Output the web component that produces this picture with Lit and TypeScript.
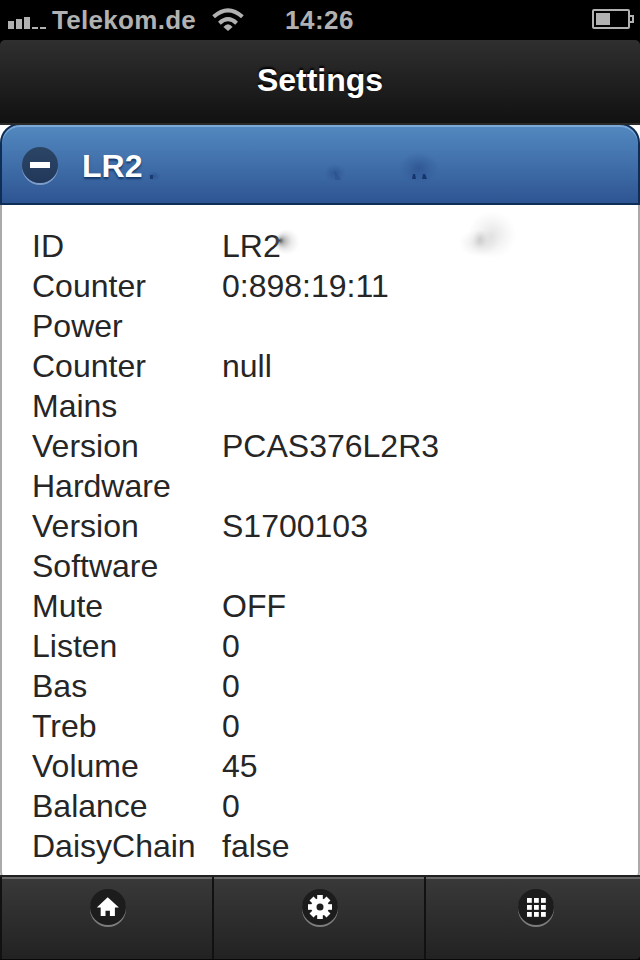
import { LitElement, html, svg, css } from "lit";
import { customElement } from "lit/decorators.js";

const rows: [string, string][] = [
  ["ID", "LR2"],
  ["Counter Power", "0:898:19:11"],
  ["Counter Mains", "null"],
  ["Version Hardware", "PCAS376L2R3"],
  ["Version Software", "S1700103"],
  ["Mute", "OFF"],
  ["Listen", "0"],
  ["Bas", "0"],
  ["Treb", "0"],
  ["Volume", "45"],
  ["Balance", "0"],
  ["DaisyChain", "false"],
];

const home = svg`<path d="M17.7 8.2 6.8 18.6h3.9V27h4.8v-5.2h4.4V27h5v-8.4h4z"/>`;
const gear = svg`
  <g>
    ${[0, 45, 90, 135].map((a) => svg`<rect x="15.2" y="6" width="5.6" height="24" transform="rotate(${a} 18 18)"/>`)}
    <circle cx="18" cy="18" r="8.8"/>
  </g>
  <circle cx="18" cy="18" r="3.5" fill="#1e1e1e"/>`;
const grid = svg`${[9, 16, 23].map((y) =>
  [9, 16, 23].map((x) => svg`<rect x=${x} y=${y} width="4.8" height="4.8"/>`)
)}`;

@customElement("app-root")
export class AppRoot extends LitElement {
  static styles = css`
    :host {
      display: flex;
      flex-direction: column;
      width: 640px;
      height: 960px;
      overflow: hidden;
      background: #000;
      font-family: "Liberation Sans", Arial, sans-serif;
      font-size: 32px;
      line-height: 40px;
      color: #262626;
    }
    * { box-sizing: border-box; }
    .status {
      flex: none;
      height: 40px;
      display: flex;
      align-items: center;
      color: #b1b1b1;
      font-size: 26px;
      font-weight: bold;
      padding-left: 8px;
    }
    .status svg { display: block; flex: none; fill: #b1b1b1; }
    .carrier { width: 160px; margin-left: 6px; letter-spacing: 0.3px; }
    .time { width: 306px; margin-left: 41px; letter-spacing: 0.5px; }
    header {
      flex: none;
      height: 85px;
      border-bottom: 2px solid #2a2a2a;
      border-radius: 5px 5px 0 0;
      background: linear-gradient(#2f2f2f, #111);
      color: #fff;
      font-weight: bold;
      text-align: center;
      line-height: 81px;
      text-shadow: 0 -2px 2px #000;
    }
    main {
      flex: 1;
      min-height: 0;
      background: #fff;
      overflow: hidden;
      display: flex;
      flex-direction: column;
    }
    .bar {
      flex: none;
      margin-top: -2px;
      height: 82px;
      border: 2px solid #0e2e55;
      border-radius: 20px 20px 0 0;
      background: linear-gradient(#5389c0, #2e5593);
      box-shadow: inset 0 2px 0 #7ba8d6;
      display: flex;
      align-items: center;
      position: relative;
      padding-left: 20px;
      color: #fff;
      font-weight: bold;
      text-shadow: 0 2px 2px #14386b;
    }
    .disc {
      width: 36px;
      height: 36px;
      border-radius: 50%;
      flex: none;
      fill: #fff;
    }
    .disc svg { display: block; }
    .bar .disc { margin-top: 2px; background: linear-gradient(#2b4565, #22385a); box-shadow: 0 2px 0 #7f9dc9; }
    .title { margin: 4px 0 0 24px; }
    .smudges { position: absolute; left: 0; top: 0; }
    .panel {
      flex: 1;
      border: 2px solid #aaa;
      border-top: 0;
      border-radius: 0 0 16px 16px;
      padding: 21px 30px 0;
      position: relative;
      margin-bottom: -12px;
    }
    .row { display: grid; grid-template-columns: 160px 1fr; column-gap: 30px; }
    footer {
      flex: none;
      height: 85px;
      border-top: 2px solid #202020;
      border-bottom: 1px solid #080808;
      border-radius: 0 0 4px 0;
      display: grid;
      grid-template-columns: 214px 212px 214px;
      background: linear-gradient(#393939, #222);
    }
    .tab {
      display: flex;
      justify-content: center;
      padding: 12px 0 0 2px;
      border-right: 2px solid #111;
      box-shadow: inset 0 2px 0 #686868;
    }
    .tab:first-child { border-left: 2px solid #111; }
    .tab:last-child { border-right: 0; padding-left: 6px; }
    .tab .disc { background: #1c1c1c; box-shadow: 0 2px 0 #7d7d7d; }
  `;

  tab(icon: unknown) {
    return html`<div class="tab"><div class="disc">
      <svg width="36" height="36" viewBox="0 0 36 36">${icon}</svg>
    </div></div>`;
  }

  render() {
    return html`
      <div class="status">
        <svg width="38" height="40" viewBox="0 0 38 40">
          <path d="M0 21h6v8H0zM8 19h6v10H8zM16 17h6v12h-6zM24 27h6v2h-6zM32 27h6v2h-6z"/>
        </svg>
        <span class="carrier">Telekom.de</span>
        <svg width="32" height="40" viewBox="212 0 32 40">
          <g fill="none" stroke="#b1b1b1" stroke-width="4">
            <path d="M213.6 16.8Q228 3.8 242.4 16.8"/>
            <path d="M219.4 23.2Q228 15.2 236.6 23.2"/>
          </g>
          <path d="M223.4 27Q228 21.6 232.6 27L228 31z"/>
        </svg>
        <span class="time">14:26</span>
        <svg width="44" height="40" viewBox="591 0 44 40">
          <rect x="593" y="10" width="36" height="18" rx="1" fill="none" stroke="#b1b1b1" stroke-width="2"/>
          <path d="M596 13h14v12h-14z"/>
          <path d="M630 16h3v6h-3" fill="none" stroke="#b1b1b1" stroke-width="2"/>
        </svg>
      </div>
      <header>Settings</header>
      <main>
        <div class="bar">
          <svg class="smudges" width="636" height="78" viewBox="2 125 636 78">
            <defs>
              <radialGradient id="b"><stop offset="0" stop-color="#264a85" stop-opacity=".6"/><stop offset="1" stop-color="#2a5190" stop-opacity="0"/></radialGradient>
            </defs>
            <ellipse cx="154" cy="176" rx="7" ry="5" fill="url(#b)"/>
            <path d="M150 175h3v4h-3z" fill="#183b72"/>
            <ellipse cx="335" cy="173" rx="11" ry="9" fill="url(#b)"/>
            <path d="M335 171l6 9h-6z" fill="#28508d" opacity=".6"/>
            <ellipse cx="419" cy="168" rx="20" ry="16" fill="url(#b)"/>
            <path d="M413 174h2l1 5h-4zM423 174h2l2 5h-5z" fill="#16356c"/>
          </svg>
          <div class="disc"><svg width="36" height="36"><rect x="8" y="15" width="20" height="6"/></svg></div>
          <span class="title">LR2</span>
        </div>
        <div class="panel">
          <svg class="smudges" width="636" height="70" viewBox="2 205 636 70">
            <defs>
              <radialGradient id="k" gradientUnits="userSpaceOnUse" cx="287" cy="242" r="13" fx="279.5" fy="240.5"><stop offset="0" stop-color="#222" stop-opacity=".85"/><stop offset=".25" stop-color="#555" stop-opacity=".42"/><stop offset=".6" stop-color="#999" stop-opacity=".2"/><stop offset="1" stop-color="#bbb" stop-opacity="0"/></radialGradient>
              <radialGradient id="g"><stop offset="0" stop-color="#777" stop-opacity=".2"/><stop offset="1" stop-color="#999" stop-opacity="0"/></radialGradient>
            </defs>
            <circle cx="287" cy="242" r="13" fill="url(#k)"/>
            <circle cx="492" cy="235" r="24" fill="url(#g)"/>
            <ellipse cx="479" cy="243" rx="20" ry="14" fill="url(#g)"/>
            <ellipse cx="480" cy="239" rx="7" ry="9" fill="url(#g)"/>
          </svg>
          ${rows.map(([k, v]) => html`<div class="row"><span>${k}</span><span>${v}</span></div>`)}
        </div>
      </main>
      <footer>${this.tab(home)}${this.tab(gear)}${this.tab(grid)}</footer>
    `;
  }
}
